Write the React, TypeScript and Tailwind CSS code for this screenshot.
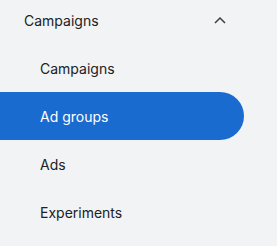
import React from 'react';

const items = [
  { label: 'Campaigns', active: false },
  { label: 'Ad groups', active: true },
  { label: 'Ads', active: false },
  { label: 'Experiments', active: false },
];

const App: React.FC = () => {
  return (
    <div className="w-[277px] h-[246px] bg-[#f1f3f4] font-['Inter',sans-serif] text-[14px]">
      <div className="flex items-center justify-between h-10 pl-6 pr-[51px] text-[#202124]">
        <span>Campaigns</span>
        <svg width="12" height="8" viewBox="0 0 12 8" fill="none">
          <path d="M1 7L6 2L11 7" stroke="#3c4043" strokeWidth="1.5" />
        </svg>
      </div>
      <div className="mt-1 flex flex-col w-[244px]">
        {items.map((item) => (
          <div
            key={item.label}
            className={`flex items-center h-12 pl-10 rounded-r-full ${
              item.active ? 'bg-[#1a6bd0] text-white' : 'text-[#202124]'
            }`}
          >
            {item.label}
          </div>
        ))}
      </div>
    </div>
  );
};

export default App;
